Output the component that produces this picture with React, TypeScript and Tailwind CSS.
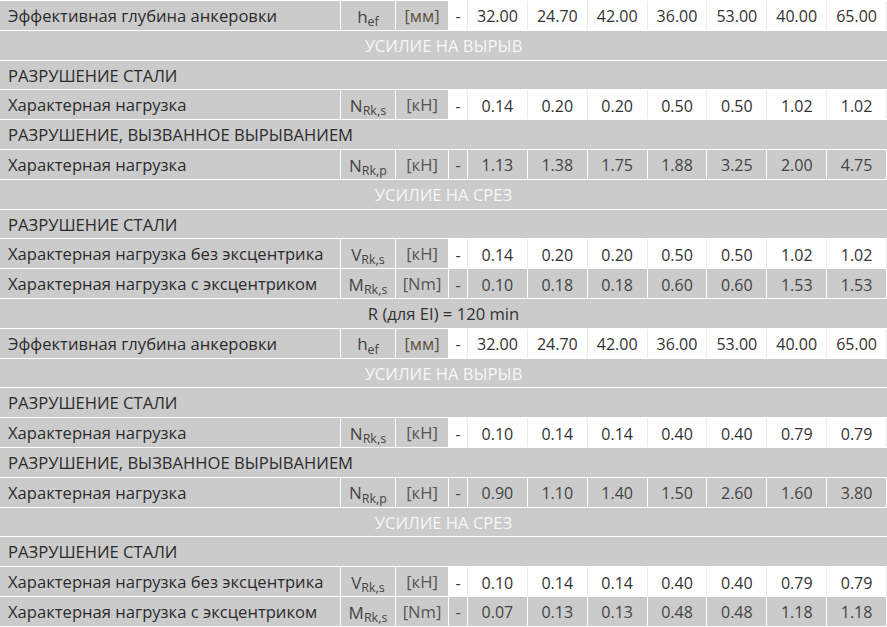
import React from "react"

type DataRow = {
  kind: "data"
  label: string
  sym: string
  sub: string
  unit: string
  unitColor?: string
  values: string[]
  white: boolean
}
type HeadRow = { kind: "head"; text: string; dark?: boolean }
type SectionRow = { kind: "section"; text: string }
type Row = DataRow | HeadRow | SectionRow

const block = (
  hef: string[],
  nrks: string[],
  nrkp: string[],
  vrks: string[],
  mrks: string[]
): Row[] => [
  { kind: "data", label: "Эффективная глубина анкеровки", sym: "h", sub: "ef", unit: "[мм]", unitColor: "text-[#5e523a]", values: hef, white: true },
  { kind: "head", text: "УСИЛИЕ НА ВЫРЫВ" },
  { kind: "section", text: "РАЗРУШЕНИЕ СТАЛИ" },
  { kind: "data", label: "Характерная нагрузка", sym: "N", sub: "Rk,s", unit: "[кН]", values: nrks, white: true },
  { kind: "section", text: "РАЗРУШЕНИЕ, ВЫЗВАННОЕ ВЫРЫВАНИЕМ" },
  { kind: "data", label: "Характерная нагрузка", sym: "N", sub: "Rk,p", unit: "[кН]", values: nrkp, white: false },
  { kind: "head", text: "УСИЛИЕ НА СРЕЗ" },
  { kind: "section", text: "РАЗРУШЕНИЕ СТАЛИ" },
  { kind: "data", label: "Характерная нагрузка без эксцентрика", sym: "V", sub: "Rk,s", unit: "[кН]", values: vrks, white: true },
  { kind: "data", label: "Характерная нагрузка с эксцентриком", sym: "M", sub: "Rk,s", unit: "[Nm]", values: mrks, white: false },
]

const rows: Row[] = [
  ...block(
    ["32.00", "24.70", "42.00", "36.00", "53.00", "40.00", "65.00"],
    ["0.14", "0.20", "0.20", "0.50", "0.50", "1.02", "1.02"],
    ["1.13", "1.38", "1.75", "1.88", "3.25", "2.00", "4.75"],
    ["0.14", "0.20", "0.20", "0.50", "0.50", "1.02", "1.02"],
    ["0.10", "0.18", "0.18", "0.60", "0.60", "1.53", "1.53"]
  ),
  { kind: "head", text: "R (для EI) = 120 min", dark: true },
  ...block(
    ["32.00", "24.70", "42.00", "36.00", "53.00", "40.00", "65.00"],
    ["0.10", "0.14", "0.14", "0.40", "0.40", "0.79", "0.79"],
    ["0.90", "1.10", "1.40", "1.50", "2.60", "1.60", "3.80"],
    ["0.10", "0.14", "0.14", "0.40", "0.40", "0.79", "0.79"],
    ["0.07", "0.13", "0.13", "0.48", "0.48", "1.18", "1.18"]
  ),
]

const cols = "grid grid-cols-[341px_55px_53px_19px_repeat(7,1fr)]"

export default function App() {
  return (
    <div
      className="w-[887px] h-[627px] overflow-hidden bg-white text-[16px] text-[#333]"
      style={{ fontFamily: '"Open Sans", "Noto Sans", sans-serif' }}
    >
      {rows.map((row, i) => {
        if (row.kind === "head") {
          return (
            <div
              key={i}
              className={`h-[29.8px] pt-[2px] border-t border-white bg-[#cbcbcb] flex items-center justify-center text-[16.6px] ${
                row.dark ? "text-[#333]" : "text-[#f7f7f7]"
              }`}
            >
              {row.text}
            </div>
          )
        }
        if (row.kind === "section") {
          return (
            <div key={i} className="h-[29.8px] pt-[2px] border-t border-white bg-[#cbcbcb] flex items-center pl-2 text-[16.6px] text-[#2b2b2b]">
              {row.text}
            </div>
          )
        }
        const cell = row.white ? "bg-white border-r border-[#ececec] text-[#333]" : "bg-[#cbcbcb] border-r border-white text-[#444]"
        return (
          <div key={i} className={`${cols} h-[29.8px] border-t border-white`}>
            <div className="bg-[#cbcbcb] border-r border-white flex items-center pl-2 pt-[2px] text-[16.6px] text-[#2b2b2b]">{row.label}</div>
            <div className="bg-[#cbcbcb] border-r border-white flex items-center justify-center pt-[2px] text-[17px] text-[#444]">
              <span>
                {row.sym}
                <sub className="text-[12.5px]">{row.sub}</sub>
              </span>
            </div>
            <div className={`bg-[#cbcbcb] border-r border-white flex items-center justify-center pt-[2px] text-[16.6px] ${row.unitColor ?? "text-[#555]"}`}>
              {row.unit}
            </div>
            <div className={`${cell} flex items-center justify-center pt-[2px]`}>-</div>
            {row.values.map((v, j) => (
              <div key={j} className={`${cell} flex items-center justify-center pt-[2px]`}>
                {v}
              </div>
            ))}
          </div>
        )
      })}
    </div>
  )
}
